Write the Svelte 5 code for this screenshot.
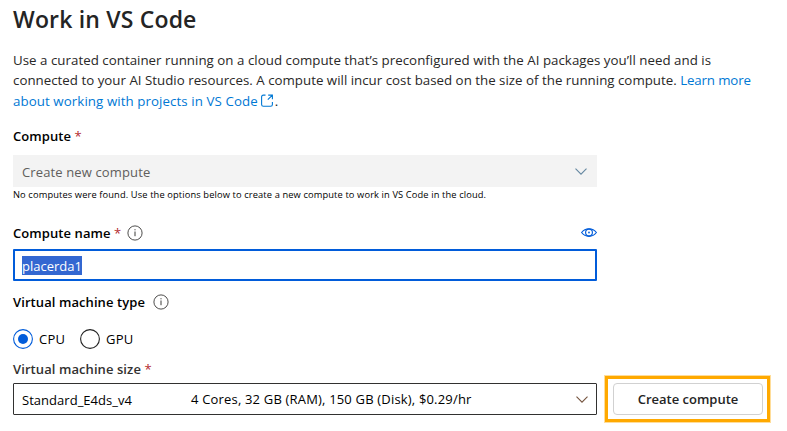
<script>
  let vmType = $state('CPU');
  const types = ['CPU', 'GPU'];
</script>

{#snippet info()}
  <svg class="info" width="16" height="16" viewBox="0 0 16 16" fill="none" stroke="#3b3a39" aria-hidden="true">
    <circle cx="8" cy="8" r="7.1" stroke-width="0.9" />
    <path d="M8 6.5v4.7M8 4.2v1.1" />
  </svg>
{/snippet}

{#snippet chevron(color)}
  <svg class="chevron" width="12" height="7" viewBox="0 0 12 7" fill="none" stroke={color} stroke-width="1.1" aria-hidden="true">
    <path d="M.5 .6 6 6.1 11.5 .6" />
  </svg>
{/snippet}

<main>
  <h1>Work in VS Code</h1>
  <div class="intro">
    <div class="l1">Use a curated container running on a cloud compute that’s preconfigured with the AI packages you’ll need and is</div>
    <div class="l2">connected to your AI Studio resources. A compute will incur cost based on the size of the running compute. <span class="link">Learn more</span></div>
    <div class="l3"><span class="link">about working with projects in VS Code</span><svg class="ext" width="12" height="13" viewBox="0 0 12 13" fill="none" stroke="#0078d4" stroke-width="1.1" aria-hidden="true"><path d="M4.5 1.1H2.4Q.6 1.1.6 2.9v7.6q0 1.8 1.8 1.8h7.2q1.8 0 1.8-1.8V8M7.2 1.1h4.2v4.2M11.4 1.1 6.8 5.7" /></svg><span>.</span></div>
  </div>

  <div class="label compute">Compute <b>*</b></div>
  <div class="field disabled"><span>Create new compute</span>{@render chevron('#6487a0')}</div>
  <div class="helper">No computes were found. Use the options below to create a new compute to work in VS Code in the cloud.</div>

  <div class="label name">
    <span>Compute name <b>*</b></span>
    {@render info()}
    <svg class="eye" width="16" height="9" viewBox="0 0 16 9" fill="none" stroke="#015cda" stroke-width="1.15" aria-hidden="true">
      <path d="M.6 4.5Q3.4.7 8 .7T15.4 4.5Q12.6 8.3 8 8.3T.6 4.5Z" />
      <circle cx="8" cy="4.5" r="3.4" />
      <circle cx="8" cy="4.5" r=".9" fill="#015cda" stroke="none" />
    </svg>
  </div>
  <div class="field focused"><span class="selected">placerda1</span></div>

  <div class="label type"><span>Virtual machine type</span>{@render info()}</div>
  <div class="radios">
    {#each types as t}
      <button class="option" class:on={vmType === t} onclick={() => (vmType = t)}>
        <svg width="20" height="20" viewBox="0 0 20 20" fill="none" aria-hidden="true">
          <circle class="ring" cx="10" cy="10" r="9.4" />
          {#if vmType === t}<circle cx="10" cy="10" r="5" fill="#015cda" />{/if}
        </svg>
        <span>{t}</span>
      </button>
    {/each}
  </div>

  <div class="label size">Virtual machine size <b>*</b></div>
  <div class="bottom">
    <div class="field select">
      <span class="sku">Standard_E4ds_v4</span>
      <span class="spec">4 Cores, 32 GB (RAM), 150 GB (Disk), $0.29/hr</span>
      {@render chevron('#75543f')}
    </div>
    <div class="highlight"><button class="create">Create compute</button></div>
  </div>
</main>

<style>
  :global(body) { background: #fff; }
  main {
    box-sizing: border-box;
    width: 787px;
    height: 431px;
    padding: 4px 0 0 13px;
    overflow: hidden;
    font: 13px/20px "Open Sans", "Noto Sans", sans-serif;
    color: #000;
  }
  h1 { margin: 0; font-size: 23px; line-height: 30px; font-weight: 600; letter-spacing: 0.17px; color: #242424; }
  .intro { margin-top: 16px; font-size: 13.3px; color: #292827; white-space: nowrap; }
  .l1 { letter-spacing: 0.025px; }
  .l2 { letter-spacing: 0.01px; }
  .l2 .link { letter-spacing: -0.15px; }
  .l3 { display: flex; align-items: center; height: 21px; letter-spacing: 0.08px; }
  .link { color: #0078d4; }
  .ext { margin: 0 2px 0 3px; }
  .label { display: flex; align-items: center; height: 20px; font-weight: 600; letter-spacing: 0.08px; white-space: pre; }
  .label b { color: #b3292e; font-weight: 400; }
  .info { margin: -1px 0 0 8px; }
  .name .info { margin-left: 6px; }
  .compute { margin-top: 15px; }
  .field { box-sizing: border-box; display: flex; align-items: center; width: 584px; height: 32px; padding: 0 9px; white-space: nowrap; }
  .disabled { justify-content: space-between; margin-top: 9px; padding-right: 10px; background: #f3f3f3; color: #605e5c; letter-spacing: 0.13px; }
  .disabled span { padding-top: 2px; }
  .helper { height: 16px; font-size: 9.3px; line-height: 16px; letter-spacing: 0.12px; white-space: nowrap; }
  .name { width: 584px; margin-top: 20px; }
  .eye { margin: -2px 0 0 auto; }
  .focused { margin-top: 6px; border: 2px solid #015cda; border-radius: 1px; padding: 0 7px; }
  .selected { height: 19px; margin-top: 1px; line-height: 20px; background: #3367d1; color: #fff; }
  .type { margin-top: 11px; }
  .radios { display: flex; gap: 15px; margin-top: 17px; }
  .option { display: flex; align-items: center; gap: 6px; padding: 0; border: 0; background: none; font: inherit; color: #000; letter-spacing: 0.2px; }
  .ring { stroke: #222; stroke-width: 1.1; }
  .on .ring { stroke: #015cda; }
  .size { margin-top: 10px; color: #323130; }
  .bottom { display: flex; align-items: center; gap: 8px; margin-top: -3px; }
  .select { border: 1px solid #323130; border-radius: 1px; padding: 0 8px; }
  .sku { width: 169px; padding-top: 2px; letter-spacing: 0.03px; }
  .spec { flex: 1; letter-spacing: 0.18px; }
  .highlight { box-sizing: border-box; width: 165px; height: 46px; padding: 4px 4px 4px 5px; border: 3px solid #ffa900; outline: 1px solid #ffdd9a; }
  .create { box-sizing: border-box; display: block; width: 150px; height: 32px; padding: 0; border: 1px solid #d1d1d1; border-radius: 4px; background: #fff; color: #242424; font: 600 13px/20px "Open Sans", sans-serif; }
</style>
